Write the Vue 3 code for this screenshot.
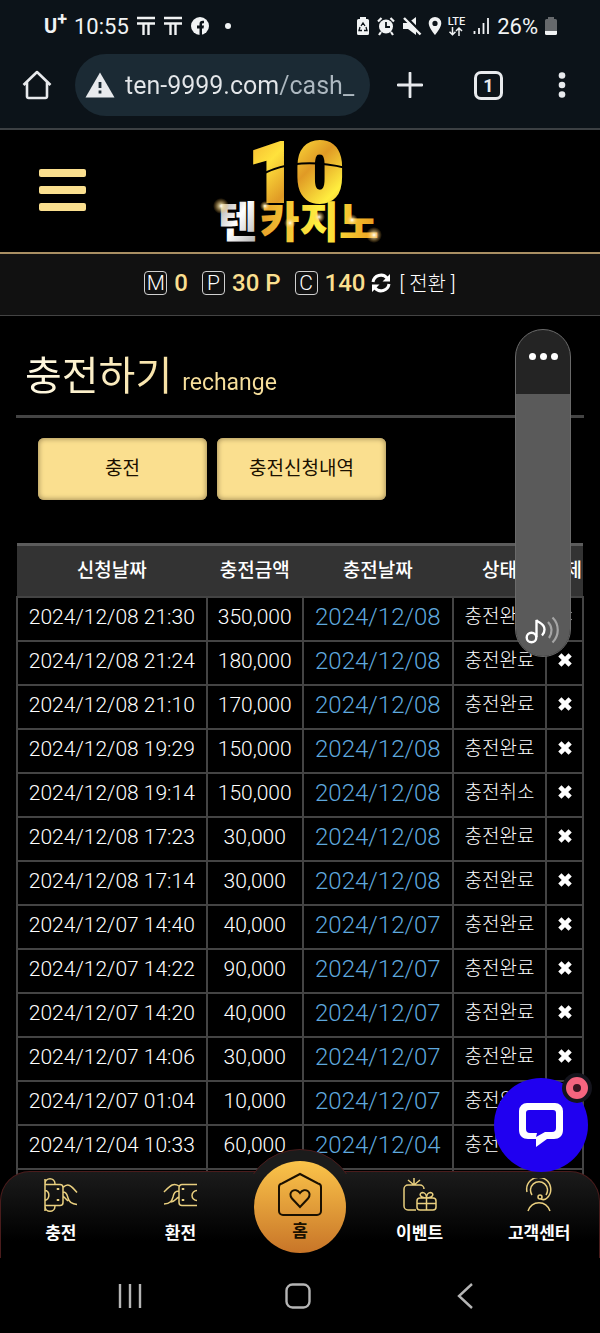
<template>
  <div class="screen">
    <div class="status-bar">
      <div class="status-left">
        <span class="carrier">U<sup>+</sup></span>
        <span class="clock">10:55</span>
        <svg v-for="n in 2" :key="n" class="status-icon" viewBox="0 0 20 20">
          <path d="M1 2h18M1 7.500h18M7.500 7.500V19M12.500 7.500V19" stroke="#f1f3f4" stroke-width="2.400" fill="none" />
        </svg>
        <svg class="status-icon" viewBox="0 0 20 20">
          <circle cx="10" cy="10" r="9" fill="#f1f3f4" />
          <path d="M9.500 19v-6.500H7v-3h2.500V8c0-2.500 1.500-3.600 4.500-3.200v2.400c-1.500-.1-2 .1-2 1.200v1.100h2l-.5 3H12V19z" fill="#0c1319" />
        </svg>
        <span class="dot"></span>
      </div>
      <div class="status-right">
        <svg class="status-icon narrow" viewBox="0 0 14 20">
          <path d="M4 3V1h6v2h1.500A1.500 1.500 0 0 1 13 4.500v13a1.500 1.500 0 0 1-1.500 1.500h-9A1.500 1.500 0 0 1 1 17.500v-13A1.500 1.500 0 0 1 2.500 3z" fill="#f1f3f4" />
          <path d="M5 10 7 7l2 3M10 11l1 3.500H8M6 14.500H3L4 11" stroke="#0c1319" stroke-width="1.300" fill="none" />
        </svg>
        <svg class="status-icon" viewBox="0 0 20 20">
          <circle cx="10" cy="10.500" r="7" fill="#f1f3f4" />
          <path d="M2 5.500 5.500 2M18 5.500 14.500 2M5 16l-2 3M15 16l2 3" stroke="#f1f3f4" stroke-width="2.200" />
          <path d="M10 6v5h4" stroke="#0c1319" stroke-width="1.800" fill="none" />
        </svg>
        <svg class="status-icon" viewBox="0 0 20 20">
          <path d="M1 7h5l8-6v18l-8-6H1z" fill="#f1f3f4" />
          <path d="M3 0l17 17" stroke="#0c1319" stroke-width="2.500" />
          <path d="M2 2l16.500 16.500" stroke="#f1f3f4" stroke-width="2.400" />
        </svg>
        <svg class="status-icon narrow" viewBox="0 0 14 20">
          <path d="M7 1a6.300 6.300 0 0 0-6.300 6.300C.7 12 7 19 7 19s6.300-7 6.300-11.700A6.300 6.300 0 0 0 7 1zm0 9a2.600 2.600 0 1 1 0-5.200A2.600 2.600 0 0 1 7 10z" fill="#f1f3f4" />
        </svg>
        <span class="lte">
          LTE
          <svg viewBox="0 0 16 9" width="16" height="9">
            <path d="M4.500 0v7.500M1.500 4.800l3 3 3-3M11 9V1M8 4l3-3 3 3" stroke="#f1f3f4" stroke-width="1.500" fill="none" />
          </svg>
        </span>
        <svg class="status-icon" viewBox="0 0 20 20">
          <path d="M3.500 15v3M8 12v6M12.500 7v11M17 2v16" stroke="#f1f3f4" stroke-width="1.800" />
        </svg>
        <span class="clock">26%</span>
        <svg class="status-icon narrow" viewBox="0 0 14 20">
          <path d="M4 3V1h6v2h1.500A1.500 1.500 0 0 1 13 4.500V15H1V4.500A1.500 1.500 0 0 1 2.500 3z" fill="#66696c" />
          <path d="M1 15h12v2.500a1.500 1.500 0 0 1-1.500 1.500h-9A1.500 1.500 0 0 1 1 17.500z" fill="#f1f3f4" />
        </svg>
      </div>
    </div>

    <div class="browser-bar">
      <button class="bar-btn" aria-label="Home">
        <svg viewBox="0 0 30 30" width="30" height="30">
          <path d="M1.500 15 15 2l13.500 13M5 12v14.500a1.500 1.500 0 0 0 1.500 1.500h17a1.500 1.500 0 0 0 1.500-1.500V12" fill="none" stroke="#e8eaed" stroke-width="2.600" stroke-linejoin="round" />
        </svg>
      </button>
      <label class="address">
        <svg viewBox="0 0 30 26" width="30" height="26" aria-hidden="true">
          <path d="M15 0.500 29.500 25.500H.5z" fill="#e8eaed" />
          <path d="M15 10v6M15 18.500v3" stroke="#1b2a34" stroke-width="2.800" />
        </svg>
        <input v-model="url" type="text" aria-label="Address" />
      </label>
      <button class="bar-btn" aria-label="New tab">
        <svg viewBox="0 0 26 26" width="26" height="26">
          <path d="M13 1v24M1 13h24" stroke="#e8eaed" stroke-width="2.800" stroke-linecap="round" />
        </svg>
      </button>
      <button class="bar-btn"><span class="tab-count">1</span></button>
      <button class="bar-btn menu-btn" aria-label="Menu">
        <svg viewBox="0 0 8 26" width="8" height="26">
          <circle v-for="y in [3.5, 13, 22.5]" :key="y" cx="4" :cy="y" r="3.300" fill="#e8eaed" />
        </svg>
      </button>
    </div>

    <header class="site-header">
      <button class="hamburger" aria-label="Menu"><i></i><i></i><i></i></button>
      <svg class="logo" viewBox="0 0 180 120" width="180" height="120">
        <defs>
          <linearGradient id="gold" x1="0" y1="0" x2="1" y2="1">
            <stop offset="0" stop-color="#f0a52c" />
            <stop offset=".3" stop-color="#ffe23c" />
            <stop offset=".55" stop-color="#e09a25" />
            <stop offset=".8" stop-color="#ffee3f" />
            <stop offset="1" stop-color="#e8a02a" />
          </linearGradient>
          <linearGradient id="goldText" x1="0" y1="0" x2="1" y2="0">
            <stop offset="0" stop-color="#e89f2a" />
            <stop offset=".5" stop-color="#fff13f" />
            <stop offset="1" stop-color="#e9981e" />
          </linearGradient>
          <linearGradient id="silver" x1="0" y1="0" x2="1" y2="1">
            <stop offset="0" stop-color="#8b8b8b" />
            <stop offset=".5" stop-color="#ffffff" />
            <stop offset="1" stop-color="#a5a5a5" />
          </linearGradient>
          <radialGradient id="spark">
            <stop offset="0" stop-color="#fff" />
            <stop offset=".3" stop-color="#ffe9a8" stop-opacity=".7" />
            <stop offset="1" stop-color="#ffb53a" stop-opacity="0" />
          </radialGradient>
        </defs>
        <text class="logo-ten" x="86" y="71" fill="url(#gold)" stroke="url(#gold)">10</text>
        <path d="M40 52Q78 24 136 38" stroke="#000" stroke-width="2" fill="none" />
        <text class="logo-name" x="8" y="108" fill="url(#silver)">텐</text>
        <text class="logo-name" x="50" y="108" fill="url(#goldText)">카지노</text>
        <circle cx="11" cy="76" r="8" fill="url(#spark)" />
        <circle cx="55" cy="76" r="5" fill="url(#spark)" />
        <circle cx="80" cy="93" r="6" fill="url(#spark)" />
        <circle cx="109" cy="87" r="6" fill="url(#spark)" />
        <circle cx="142" cy="90" r="6" fill="url(#spark)" />
        <circle cx="164" cy="105" r="8" fill="url(#spark)" />
      </svg>
    </header>

    <div class="balance">
      <span v-for="b in balances" :key="b.badge" class="balance-item">
        <span class="badge">{{ b.badge }}</span>
        <b>{{ b.value }}</b>
      </span>
      <button class="convert">
        <svg viewBox="0 0 20 20" width="20" height="20" aria-hidden="true">
          <path d="M2 9a8 8 0 0 1 14-4M18 11a8 8 0 0 1-14 4" stroke="#fff" stroke-width="3" fill="none" />
          <path d="M19 1v7.500h-7.500zM1 19v-7.500h7.500z" fill="#fff" />
        </svg>
        [ 전환 ]
      </button>
    </div>

    <main class="content">
      <h1 class="title">충전하기 <small>rechange</small></h1>
      <div class="tabs">
        <button>충전</button>
        <button>충전신청내역</button>
      </div>

      <table class="history">
        <colgroup>
          <col class="c-date" />
          <col class="c-amount" />
          <col class="c-day" />
          <col class="c-state" />
          <col class="c-del" />
        </colgroup>
        <thead>
          <tr>
            <th>신청날짜</th>
            <th>충전금액</th>
            <th>충전날짜</th>
            <th>상태</th>
            <th>삭제</th>
          </tr>
        </thead>
        <tbody>
          <tr v-for="row in rows" :key="row.time">
            <td>{{ row.time }}</td>
            <td>{{ row.amount }}</td>
            <td class="day">{{ row.time.slice(0, 10) }}</td>
            <td class="state">{{ row.state }}</td>
            <td>
              <button class="del" aria-label="삭제">
                <svg viewBox="0 0 14 14" width="16" height="16">
                  <path d="M2.500 2.500l9 9M11.500 2.500l-9 9" stroke="#fff" stroke-width="4" />
                </svg>
              </button>
            </td>
          </tr>
          <tr>
            <td v-for="n in 5" :key="n"></td>
          </tr>
        </tbody>
      </table>
    </main>

    <div class="volume">
      <button class="volume-more" aria-label="More"><i></i><i></i><i></i></button>
      <div class="volume-level">
        <svg viewBox="0 0 36 30" width="36" height="30">
          <circle cx="6.500" cy="22.500" r="4.800" fill="none" stroke="#fff" stroke-width="2.400" />
          <path d="M11.500 22V5c1.500 3 8 3 8 9.500 0 2.500-1 4.500-2.500 6" fill="none" stroke="#fff" stroke-width="2.400" />
          <path d="M23 7c4.500 4.500 4.500 11 1 16M27.500 2.500c7 7 7 18 0 25" fill="none" stroke="#a5a5a5" stroke-width="2.200" />
        </svg>
      </div>
    </div>

    <button class="chat" aria-label="Chat">
      <svg viewBox="0 0 44 44" width="44" height="44">
        <path d="M8 0h28a8 8 0 0 1 8 8v19c0 6-4 9-9 9h-7l-11 8v-8H9c-5 0-9-3-9-9V8a8 8 0 0 1 8-8zM10 7a3 3 0 0 0-3 3v16a4 4 0 0 0 4 4h7l-1 4 9-5h7a4 4 0 0 0 4-4V10a3 3 0 0 0-3-3z" fill="#fff" fill-rule="evenodd" />
      </svg>
      <span class="chat-badge"></span>
    </button>

    <div class="bottom">
      <nav class="tabbar">
        <div class="bump"></div>
        <a href="#charge">
          <svg viewBox="0 0 34 34" width="34" height="34">
            <path d="M1 1v32M1 6c0-7 10-7 10 0M1 28c0 7 10 7 10 0M1 6.500h15a3 3 0 0 1 3 3v15a3 3 0 0 1-3 3H1M1 12a5.500 5.500 0 0 1 0 10.500M19 9.500c5-5 8-2 14 5M19 14c4 0 4 3 5 6 1 4 3 6 9 6.500M19 18l5 5" />
            <path d="M14 10v2M14 21v2" class="thick" />
          </svg>
          충전
        </a>
        <a href="#exchange">
          <svg viewBox="0 0 34 34" width="34" height="34">
            <path d="M34 6.500H19a3 3 0 0 0-3 3v15a3 3 0 0 0 3 3h15M34 12.500a5 5 0 0 0 0 10M16 8C10 4 7 8 1 14M16 13c-4 0-5 2-6 6-1 3-2 7-9 7M16 19c-3 1-4 5-8 5" />
            <path d="M20 10v2M20 21v2" class="thick" />
          </svg>
          환전
        </a>
        <a href="#home" class="home">
          <svg viewBox="0 0 46 46" width="46" height="46">
            <path d="M23 2 5 11.500A3.500 3.500 0 0 0 2 15v24a4 4 0 0 0 4 4h34a4 4 0 0 0 4-4V15a3.500 3.500 0 0 0-3-3.500zM23 35l-8-8.500c-5-6 3-12 8-5.500 5-6.500 13-.5 8 5.500z" />
          </svg>
          홈
        </a>
        <a href="#event">
          <svg viewBox="0 0 34 34" width="34" height="34">
            <path d="M13 32H5a4 4 0 0 1-4-4V11a4 4 0 0 1 4-4h12a4 4 0 0 1 4 4M11 7V0M11 7 5 2M11 7l6-5" />
            <path d="M17 20h13a3 3 0 0 1 3 3v6a3 3 0 0 1-3 3H17a3 3 0 0 1-3-3v-6a3 3 0 0 1 3-3zM23.500 20v12M14 25.500h19M23.500 20c-7 0-8-5-4-5.500 2 0 4 2 4 5.500 0-3.500 2-5.500 4-5.500 4 .5 3 5.500-4 5.500z" />
          </svg>
          이벤트
        </a>
        <a href="#center">
          <svg viewBox="0 0 34 34" width="34" height="34">
            <path d="M5 14a12 12 0 1 1 20 6c-2 2-4 2-6 1M10 17a8.500 8.500 0 1 1 14 0M16 19a2 2 0 1 0 2-2 2 2 0 0 0-2 2M6 33c4-11 18-11 22 0" />
          </svg>
          고객센터
        </a>
      </nav>
      <div class="system-nav">
        <button aria-label="Recents">
          <svg viewBox="0 0 26 26" width="26" height="26"><path d="M3 1v24M13 1v24M23 1v24" /></svg>
        </button>
        <button aria-label="Home">
          <svg viewBox="0 0 26 26" width="26" height="26"><rect x="1.500" y="1.500" width="23" height="23" rx="6" /></svg>
        </button>
        <button aria-label="Back">
          <svg viewBox="0 0 26 26" width="26" height="26"><path d="M19 1 6 13l13 12" /></svg>
        </button>
      </div>
    </div>
  </div>
</template>

<script setup>
import { ref } from 'vue'

const url = ref('ten-9999.com/cash_')

const balances = [
  { badge: 'M', value: '0' },
  { badge: 'P', value: '30 P' },
  { badge: 'C', value: '140' },
]

const rows = [
  { time: '2024/12/08 21:30', amount: '350,000', state: '충전완료' },
  { time: '2024/12/08 21:24', amount: '180,000', state: '충전완료' },
  { time: '2024/12/08 21:10', amount: '170,000', state: '충전완료' },
  { time: '2024/12/08 19:29', amount: '150,000', state: '충전완료' },
  { time: '2024/12/08 19:14', amount: '150,000', state: '충전취소' },
  { time: '2024/12/08 17:23', amount: '30,000', state: '충전완료' },
  { time: '2024/12/08 17:14', amount: '30,000', state: '충전완료' },
  { time: '2024/12/07 14:40', amount: '40,000', state: '충전완료' },
  { time: '2024/12/07 14:22', amount: '90,000', state: '충전완료' },
  { time: '2024/12/07 14:20', amount: '40,000', state: '충전완료' },
  { time: '2024/12/07 14:06', amount: '30,000', state: '충전완료' },
  { time: '2024/12/07 01:04', amount: '10,000', state: '충전완료' },
  { time: '2024/12/04 10:33', amount: '60,000', state: '충전완료' },
]
</script>

<style>
body {
  margin: 0;
  background: #000;
}
</style>

<style scoped>
.screen {
  position: relative;
  display: flex;
  flex-direction: column;
  height: 100vh;
  overflow: hidden;
  background: #000;
  color: #fff;
  font-family: Roboto, "Noto Sans CJK KR", sans-serif;
}
button {
  padding: 0;
  border: none;
  background: none;
  color: inherit;
  font: inherit;
  cursor: pointer;
}
svg {
  display: block;
  flex: none;
}

/* status bar */
.status-bar {
  display: flex;
  justify-content: space-between;
  align-items: center;
  height: 52px;
  padding: 0 42px 0 44px;
  background: #0c1319;
  color: #f1f3f4;
}
.status-left,
.status-right {
  display: flex;
  align-items: center;
  gap: 7px;
}
.status-right {
  gap: 6px;
}
.carrier {
  font-size: 20px;
  font-weight: 700;
}
.carrier sup {
  font-size: 18px;
  line-height: 0;
}
.clock {
  font-size: 22px;
}
.status-icon {
  width: 20px;
  height: 20px;
}
.status-icon.narrow {
  width: 14px;
}
.dot {
  width: 6px;
  height: 6px;
  margin-left: 8px;
  border-radius: 50%;
  background: #f1f3f4;
}
.lte {
  display: flex;
  flex-direction: column;
  align-items: center;
  font-size: 11px;
  line-height: 11px;
  font-weight: 500;
}

/* browser toolbar */
.browser-bar {
  display: flex;
  align-items: center;
  height: 78px;
  padding: 0 20px 10px 22px;
  box-sizing: border-box;
  border-bottom: 2px solid #3c4043;
  background: #0c1319;
  color: #e8eaed;
}
.bar-btn {
  display: flex;
  justify-content: center;
  flex: none;
  width: 79px;
}
.bar-btn:first-child {
  width: 30px;
  margin-right: 23px;
}
.menu-btn {
  width: 36px;
  margin-left: 16px;
}
.address {
  display: flex;
  align-items: center;
  flex: 1;
  gap: 10px;
  min-width: 0;
  height: 62px;
  padding: 0 8px 0 10px;
  box-sizing: border-box;
  border-radius: 31px;
  background: #1b2a34;
}
.address input {
  flex: 1;
  min-width: 0;
  padding: 0;
  border: none;
  outline: none;
  background: linear-gradient(90deg, #e3e6e9 153px, #adb8c0 153px);
  background-clip: text;
  color: transparent;
  font: 25px Roboto, sans-serif;
}
.tab-count {
  width: 23px;
  height: 23px;
  border: 3px solid #e8eaed;
  border-radius: 7px;
  font-size: 18px;
  line-height: 23px;
  font-weight: 700;
}

/* site header */
.site-header {
  position: relative;
  display: flex;
  justify-content: center;
  height: 122px;
  border-bottom: 2px solid #a98f63;
}
.hamburger {
  position: absolute;
  left: 39px;
  top: 39px;
  display: flex;
  flex-direction: column;
  gap: 9px;
}
.hamburger i {
  width: 47px;
  height: 8px;
  border-radius: 2px;
  background: #fadf8f;
}
.logo {
  overflow: visible;
}
.logo-ten {
  font: 900 82px Roboto, sans-serif;
  text-anchor: middle;
  stroke-width: 4;
}
.logo-name {
  font: 900 43px "Noto Sans CJK KR", sans-serif;
}

.balance {
  display: flex;
  justify-content: center;
  align-items: center;
  flex: none;
  height: 62px;
  padding-bottom: 4px;
  box-sizing: border-box;
  border-bottom: 1px solid #444;
  background: #111;
}
.balance-item {
  display: flex;
  align-items: center;
  margin-right: 14px;
  gap: 7px;
}
.balance-item:nth-child(3) {
  margin-right: 6px;
}
.balance-item b {
  color: #fadf8f;
  font-size: 24px;
  font-weight: 500;
}
.badge {
  width: 21px;
  height: 22px;
  border: 1px solid #d0d0d0;
  border-radius: 4px;
  font-size: 21px;
  line-height: 22px;
  font-weight: 300;
  text-align: center;
}
.convert {
  display: flex;
  align-items: center;
  gap: 8px;
  font-size: 20px;
  font-weight: 300;
}

/* page body */
.content {
  flex: 1;
  min-height: 0;
  padding: 29px 16px 0;
  overflow: hidden;
}
.title {
  margin: 0;
  padding: 0 9px;
  border-bottom: 3px solid #444;
  background: linear-gradient(90deg, #fffbe9 0, #f7df9c 170px);
  background-clip: text;
  color: transparent;
  font-size: 40px;
  line-height: 64px;
  font-weight: 400;
}
.title small {
  font-size: 23px;
}
.tabs {
  display: flex;
  gap: 10px;
  padding: 20px 22px 43px;
}
.tabs button {
  width: 169px;
  height: 62px;
  padding-bottom: 5px;
  border-radius: 6px;
  background: #fadf8f;
  box-shadow: inset 0 0 5px 1px #a8925a;
  color: #1a1000;
  font-size: 19px;
}
.history {
  width: 100%;
  table-layout: fixed;
  border-collapse: collapse;
  font-weight: 300;
  font-size: 21px;
}
.c-date {
  width: 33.5%;
}
.c-amount {
  width: 17%;
}
.c-day {
  width: 26.5%;
}
.c-state {
  width: 16.5%;
}
.c-del {
  width: 6.5%;
}
.history th {
  height: 45px;
  padding: 0 0 5px;
  border-top: 3px solid #5c5c5c;
  background: #333;
  font-size: 19px;
  font-weight: 500;
  white-space: nowrap;
}
.history td {
  height: 38px;
  padding: 0 0 4px;
  border: 2px solid #444;
  line-height: 24px;
  text-align: center;
  white-space: nowrap;
}
.history .day {
  color: #5fa8de;
  font-size: 24px;
}
.history .state {
  font-size: 19px;
}
.del svg {
  margin: 2px auto 0;
}

/* volume slider over the page */
.volume {
  position: absolute;
  top: 329px;
  right: 29px;
  width: 54px;
  height: 326px;
  display: flex;
  flex-direction: column;
  overflow: hidden;
  border: 1px solid #6a6a6a;
  border-radius: 28px;
  background: #242424;
}
.volume-more {
  display: flex;
  justify-content: center;
  align-items: center;
  gap: 4px;
  height: 64px;
  padding-bottom: 11px;
}
.volume-more i {
  width: 7px;
  height: 7px;
  border-radius: 50%;
  background: #fff;
}
.volume-level {
  display: flex;
  justify-content: center;
  align-items: flex-end;
  flex: 1;
  padding-bottom: 11px;
  background: #5a5a5a;
}

.chat {
  position: absolute;
  right: 12px;
  bottom: 161px;
  z-index: 2;
  display: flex;
  justify-content: center;
  align-items: center;
  width: 94px;
  height: 94px;
  border-radius: 50%;
  background: #2000f0;
}
.chat-badge {
  position: absolute;
  top: -1px;
  right: 0;
  width: 8px;
  height: 8px;
  border: 7px solid #f5647f;
  border-radius: 50%;
  background: #3a1420;
  box-shadow: 0 0 0 4px #14141c;
}

/* bottom navigation */
.bottom {
  position: absolute;
  left: 0;
  right: 0;
  bottom: 0;
}
.tabbar {
  position: relative;
  display: flex;
  height: 86px;
  border: 1px solid #4a1c1c;
  border-bottom: none;
  border-radius: 30px 30px 0 0;
  background: linear-gradient(#1b1b1b, #000 80%);
}
.tabbar a {
  position: relative;
  display: flex;
  flex-direction: column;
  align-items: center;
  flex: 1;
  gap: 8px;
  padding-top: 6px;
  color: #fff;
  font-size: 17px;
  line-height: 26px;
  font-weight: 700;
  text-decoration: none;
}
.tabbar svg {
  fill: none;
  stroke: #e9cf7f;
  stroke-width: 1.5;
}
.tabbar .thick {
  stroke-width: 2.5;
}
.bump {
  position: absolute;
  left: 50%;
  top: -23px;
  width: 114px;
  height: 25px;
  overflow: hidden;
  transform: translateX(-50%);
}
.bump::before {
  content: "";
  display: block;
  height: 112px;
  border: 1px solid #4a1c1c;
  border-radius: 50%;
  background: #1b1b1b;
}
.tabbar .home {
  gap: 0;
  padding: 0;
  color: #1a1000;
}
.tabbar .home::before {
  content: "";
  position: absolute;
  top: -11px;
  left: 50%;
  width: 92px;
  height: 92px;
  border-radius: 50%;
  background: linear-gradient(#fbc44a, #c87528);
  transform: translateX(-50%);
}
.tabbar .home svg {
  position: relative;
  stroke: #1a1000;
  stroke-width: 2;
}
.home {
  isolation: isolate;
}
.home::before {
  z-index: -1;
}
.system-nav {
  display: grid;
  grid-template-columns: repeat(3, 1fr);
  place-items: center;
  height: 75px;
  padding: 0 50px 0 46px;
  background: #000;
}
.system-nav svg {
  fill: none;
  stroke: #b5b5b5;
  stroke-width: 2.4;
}
</style>
